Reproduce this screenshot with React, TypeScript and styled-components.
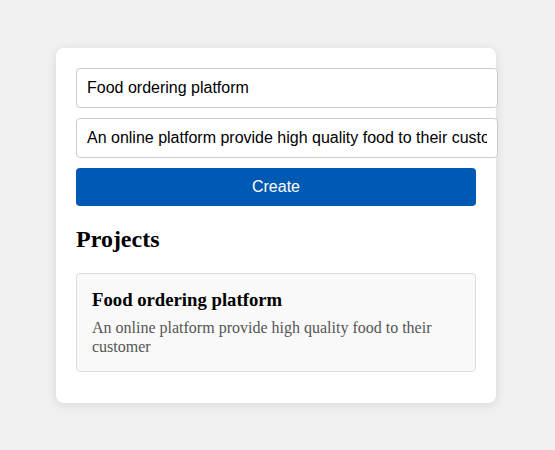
import styled, { createGlobalStyle } from 'styled-components';

const GlobalStyle = createGlobalStyle`
	body {
		margin: 0;
		background: #f0f0f0;
		font-family: 'Liberation Serif', 'Times New Roman', serif;
	}
`;

const Page = styled.div`
	padding: 48px 0 48px 56px;
`;

const Card = styled.div`
	width: 400px;
	padding: 20px;
	background: #fff;
	border-radius: 8px;
	box-shadow: 0 2px 10px rgba(0, 0, 0, 0.1);
`;

const Form = styled.form`
	display: flex;
	flex-direction: column;
	align-items: flex-start;
	gap: 10px;
`;

const Input = styled.input`
	width: 400px;
	padding: 10px;
	border: 1px solid #ccc;
	border-radius: 4px;
	font-family: 'Liberation Sans', Arial, sans-serif;
	font-size: 16px;
	line-height: 18px;
	color: #000;
	outline: none;
`;

const Button = styled.button`
	width: 400px;
	height: 38px;
	border: none;
	border-radius: 4px;
	background: #0059b3;
	color: #fff;
	font-family: 'Liberation Sans', Arial, sans-serif;
	font-size: 16px;
	cursor: pointer;
`;

const Title = styled.h2`
	font-size: 24px;
	margin: 20px 0;
`;

const Project = styled.div`
	padding: 15px;
	margin-bottom: 11px;
	background: #f9f9f9;
	border: 1px solid #ddd;
	border-radius: 4px;
`;

const ProjectName = styled.h3`
	font-size: 18.72px;
	margin: 0 0 8px;
`;

const ProjectDesc = styled.p`
	margin: 0;
	font-size: 16px;
	line-height: 18.5px;
	color: #555;
`;

const projects = [
	{
		name: 'Food ordering platform',
		description: 'An online platform provide high quality food to their customer',
	},
];

export default function App() {
	return (
		<>
			<GlobalStyle />
			<Page>
				<Card>
					<Form onSubmit={(e) => e.preventDefault()}>
						<Input defaultValue="Food ordering platform" />
						<Input defaultValue="An online platform provide high quality food to their customer" />
						<Button type="submit">Create</Button>
					</Form>
					<Title>Projects</Title>
					{projects.map((p) => (
						<Project key={p.name}>
							<ProjectName>{p.name}</ProjectName>
							<ProjectDesc>{p.description}</ProjectDesc>
						</Project>
					))}
				</Card>
			</Page>
		</>
	);
}
